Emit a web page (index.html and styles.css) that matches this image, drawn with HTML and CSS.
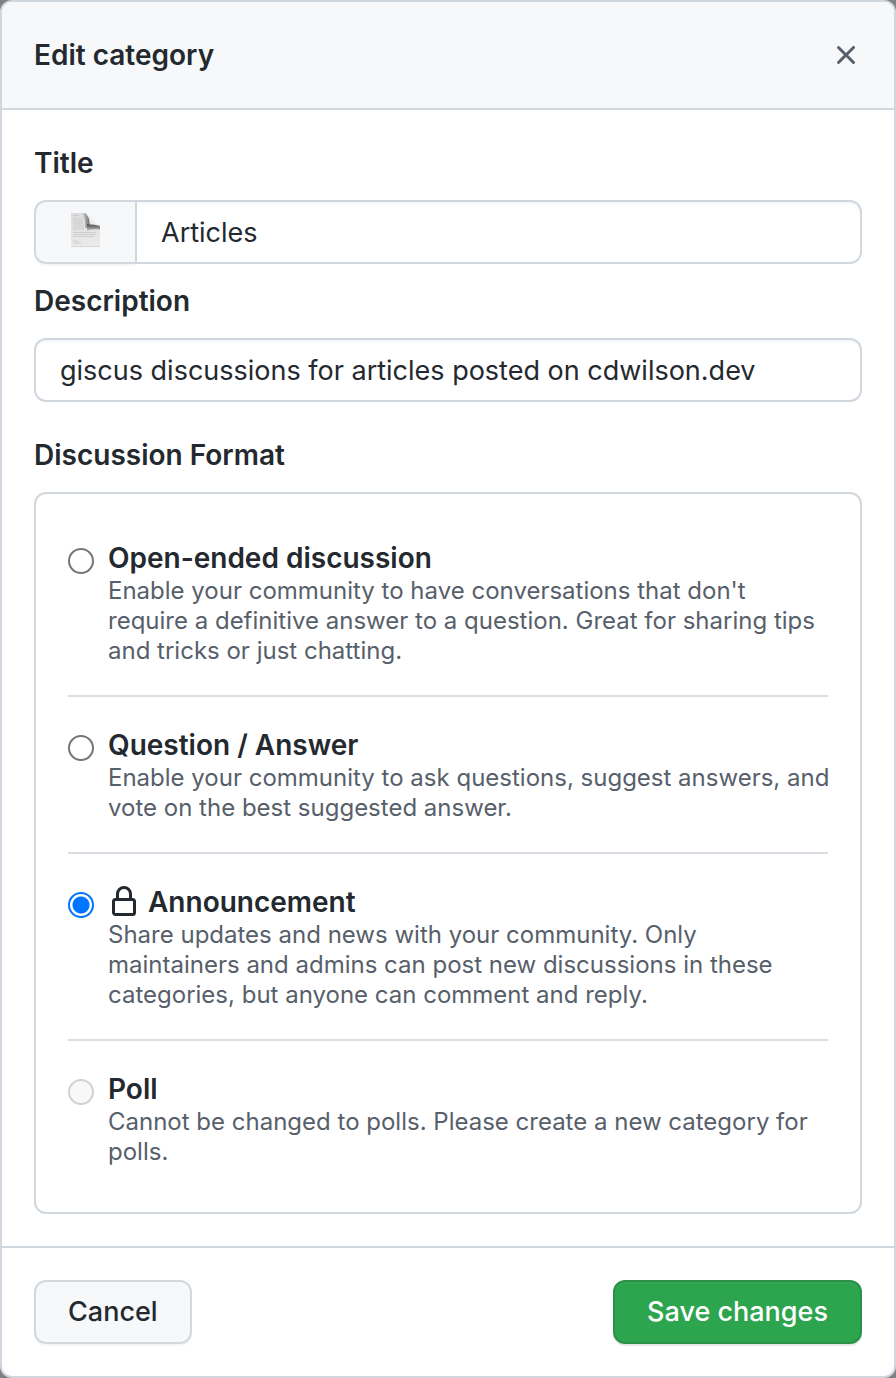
FILE: index.html
```html
<!DOCTYPE html>
<html lang="en">
<head>
<meta charset="utf-8">
<meta name="viewport" content="width=device-width, initial-scale=1">
<title>Edit category</title>
<link rel="stylesheet" href="styles.css">
</head>
<body>
<form class="dialog" role="dialog" aria-labelledby="dialog-title">
  <header class="dialog-header">
    <h1 class="dialog-title" id="dialog-title">Edit category</h1>
    <button class="close" type="button" aria-label="Close">
      <svg width="32" height="32" viewBox="0 0 16 16" fill="currentColor" aria-hidden="true"><path d="M3.72 3.72a.75.75 0 011.06 0L8 6.94l3.22-3.22a.75.75 0 111.06 1.06L9.06 8l3.22 3.22a.75.75 0 11-1.06 1.06L8 9.06l-3.22 3.22a.75.75 0 01-1.06-1.06L6.94 8 3.72 4.78a.75.75 0 010-1.06z"/></svg>
    </button>
  </header>
  <div class="dialog-body">
    <label class="label" for="title">Title</label>
    <div class="title-row">
      <button class="emoji" type="button" aria-label="Choose emoji">
        <svg width="32" height="36" viewBox="0 0 32 36" aria-hidden="true">
          <defs>
            <linearGradient id="paper" x1="0" y1="0" x2="0" y2="1"><stop offset="0" stop-color="#dcdcdc"/><stop offset="1" stop-color="#ebebeb"/></linearGradient>
            <linearGradient id="band" x1="0" y1="0" x2="1" y2="0"><stop offset="0" stop-color="#dcdcdc"/><stop offset="1" stop-color="#666666"/></linearGradient>
            <linearGradient id="fold" x1="0" y1="0" x2="0" y2="1"><stop offset="0" stop-color="#505050"/><stop offset="0.5" stop-color="#808080"/><stop offset="1" stop-color="#d8d8d8"/></linearGradient>
            <linearGradient id="curl" x1="0" y1="1" x2="1" y2="0"><stop offset="0" stop-color="#cccccc"/><stop offset="0.4" stop-color="#eeeeee"/><stop offset="1" stop-color="#fafafa"/></linearGradient>
          </defs>
          <path d="M1 1H15q4 2 4 10l9 2q2 1 2 4v18H1z" fill="url(#paper)"/>
          <path d="M12 1h3q5 1 5 11v3l-5 1q1-9-3-15z" fill="url(#band)"/>
          <path d="M17 12q9-1 12 1 2 2 1 5-5-2-13 1z" fill="url(#fold)"/>
          <path d="M15 1q5 1 14.500 13-4-2-10-1.500Q20 5 15 1z" fill="url(#curl)"/>
          <path d="M3 3.500h5M3 7h10M3 9h10M3 11h11M3 13h11M3 15h11M3 17h11M3 20.500h23M3 22.500h23M3 24.500h21M3 29h5M3 31h8" stroke="#c6c6c6" stroke-width=".8"/>
          <path d="M1 34.600h29" stroke="#d0d0d0" stroke-width=".8"/>
        </svg>
      </button>
      <input class="field field-joined" id="title" type="text" value="Articles">
    </div>
    <label class="label label-next" for="description">Description</label>
    <input class="field" id="description" type="text" value="giscus discussions for articles posted on cdwilson.dev">
    <fieldset class="formats">
      <legend class="label label-group">Discussion Format</legend>
      <div class="options">
        <div class="option">
          <input class="radio" type="radio" name="format" id="open" aria-describedby="open-note">
          <div class="option-text">
            <label class="option-title" for="open">Open-ended discussion</label>
            <p class="note" id="open-note">Enable your community to have conversations that don't require a definitive answer to a question. Great for sharing tips and tricks or just chatting.</p>
          </div>
        </div>
        <div class="option">
          <input class="radio" type="radio" name="format" id="question" aria-describedby="question-note">
          <div class="option-text">
            <label class="option-title" for="question">Question / Answer</label>
            <p class="note" id="question-note">Enable your community to ask questions, suggest answers, and vote on the best suggested answer.</p>
          </div>
        </div>
        <div class="option">
          <input class="radio" type="radio" name="format" id="announcement" aria-describedby="announcement-note" checked>
          <div class="option-text">
            <label class="option-title" for="announcement"><svg width="32" height="32" viewBox="0 0 16 16" fill="currentColor" aria-hidden="true"><path fill-rule="evenodd" d="M4 4v2h-.25A1.750 1.750 0 002 7.750v5.500c0 .966.784 1.750 1.750 1.750h8.500A1.750 1.750 0 0014 13.250v-5.500A1.750 1.750 0 0012.250 6H12V4a4 4 0 10-8 0zm6.500 2V4a2.500 2.500 0 10-5 0v2h5zM12 7.500h.25a.25.25 0 01.25.25v5.500a.25.25 0 01-.25.25h-8.500a.25.25 0 01-.25-.25v-5.500a.25.25 0 01.25-.25H12z"/></svg>Announcement</label>
            <p class="note" id="announcement-note">Share updates and news with your community. Only maintainers and admins can post new discussions in these categories, but anyone can comment and reply.</p>
          </div>
        </div>
        <div class="option">
          <input class="radio" type="radio" name="format" id="poll" aria-describedby="poll-note" disabled>
          <div class="option-text">
            <label class="option-title" for="poll">Poll</label>
            <p class="note" id="poll-note">Cannot be changed to polls. Please create a new category for polls.</p>
          </div>
        </div>
      </div>
    </fieldset>
  </div>
  <footer class="dialog-footer">
    <button class="button" type="button">Cancel</button>
    <button class="button button-primary" type="submit">Save changes</button>
  </footer>
</form>
</body>
</html>
```
FILE: styles.css
```css
* { box-sizing: border-box; }

body {
  margin: 0;
  background: #808080;
  color: #24292f;
  font-family: Inter, "Liberation Sans", sans-serif;
  font-size: 28px;
  line-height: 42px;
}

button, input { font: inherit; color: inherit; margin: 0; }

.dialog {
  background: #fff;
  border: 2px solid #d0d7de;
  border-radius: 12px;
  overflow: hidden;
}

.dialog-header {
  display: flex;
  align-items: center;
  justify-content: space-between;
  padding: 32px;
  background: #f6f8fa;
  border-bottom: 2px solid #d0d7de;
}

.dialog-title { margin: 0; font-size: 28px; font-weight: 600; }

.close {
  display: flex;
  padding: 0;
  border: 0;
  background: none;
  color: #57606a;
}

.dialog-body { padding: 32px; }

.label { display: block; margin-bottom: 16px; padding: 0; font-weight: 600; }
.label-next { margin-top: 16px; }

.title-row { display: flex; }

.emoji {
  display: flex;
  align-items: center;
  justify-content: center;
  width: 101px;
  height: 64px;
  padding: 0 0 4px;
  border: 2px solid #d5d8da;
  border-right: 0;
  border-radius: 12px 0 0 12px;
  background: #f6f8fa;
  box-shadow: 0 2px 0 rgba(27, 31, 36, .04);
}

.field {
  display: block;
  width: 100%;
  height: 64px;
  padding: 0 24px;
  border: 2px solid #d0d7de;
  border-radius: 12px;
  background: #fff;
  box-shadow: inset 0 2px 0 rgba(208, 215, 222, .2);
  font-size: 27px;
}

.field-joined { flex: 1; min-width: 0; border-radius: 0 12px 12px 0; }

.formats { min-width: 0; margin: 32px 0 0; padding: 0; border: 0; }

.options {
  padding: 16px 32px;
  border: 2px solid #d0d7de;
  border-radius: 12px;
}

.option { display: flex; gap: 14px; padding: 30px 0 29px; }
.option + .option { border-top: 2px solid #d8dee4; }

.option-text { flex: 1; min-width: 0; margin-right: -2px; }

.option-title {
  display: flex;
  align-items: center;
  gap: 8px;
  font-weight: 600;
  line-height: 36px;
}

.note { margin: 0; color: #57606a; font-size: 24px; line-height: 30px; }

.radio {
  appearance: none;
  flex: none;
  width: 26px;
  height: 26px;
  margin-top: 8px;
  border: 2px solid #767676;
  border-radius: 50%;
  background: #fff;
}

.radio:checked {
  border-color: #0075ff;
  background: radial-gradient(circle, #0075ff 8px, #fff 9px);
}

.radio:disabled { border-color: #d1d1d1; background: #f8f8f8; }

.dialog-footer {
  display: flex;
  justify-content: space-between;
  padding: 32px;
  border-top: 2px solid #d0d7de;
}

.button {
  height: 64px;
  padding: 0 32px;
  border: 2px solid #d5d8da;
  border-radius: 12px;
  background: #f6f8fa;
  box-shadow: 0 2px 0 rgba(27, 31, 36, .04);
  font-size: 27px;
  font-weight: 500;
}

.button-primary {
  border-color: #2a9147;
  background: #2da44e;
  color: #fff;
  box-shadow: 0 2px 0 rgba(27, 31, 36, .1), inset 0 2px 0 rgba(255, 255, 255, .03);
}
```
